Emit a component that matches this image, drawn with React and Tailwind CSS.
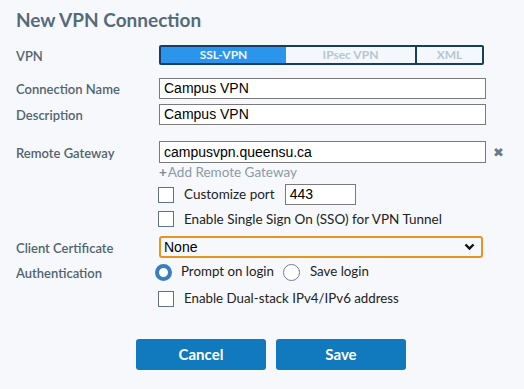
import React from 'react';

const labelCls = 'w-[143px] shrink-0 pt-[3px] text-[13px] font-semibold text-[#52646f]';

function Checkbox() {
  return <span className="block h-[16px] w-[16px] shrink-0 border border-[#60717f] bg-white" />;
}

function Radio({ checked }) {
  return checked ? (
    <span className="block h-[17px] w-[17px] shrink-0 rounded-full border-[4px] border-[#3a7ebf] bg-white" />
  ) : (
    <span className="block h-[17px] w-[17px] shrink-0 rounded-full border border-[#6f7f8c] bg-white" />
  );
}

function TextInput({ value, className = '' }) {
  return (
    <div
      className={`flex h-full items-center border border-[#7a7a7a] bg-white pl-[4px] font-['Liberation_Sans',Arial,sans-serif] text-[14px] text-black ${className}`}
    >
      {value}
    </div>
  );
}

export default function App() {
  return (
    <div className="h-[389px] w-[524px] overflow-hidden bg-[#f7f8fb] pl-[16px] font-['Lato',sans-serif]">
      <h1 className="h-[34px] pt-[6px] text-[19px] font-bold leading-[28px] text-[#566b79]">New VPN Connection</h1>

      <div className="mt-[11px] flex h-[20px] items-center">
        <div className={labelCls + ' pt-0'}>VPN</div>
        <div className="flex h-full w-[325px] overflow-hidden rounded-[2px] border-2 border-[#163d63] text-[12px] font-bold">
          <div className="flex w-[125px] items-center justify-center bg-[#2a95eb] text-[#f2f7fc]">SSL-VPN</div>
          <div className="flex w-[131px] items-center justify-center border-r-2 border-[#163d63] bg-[#f4f7fb] text-[#b5c6d2]">
            IPsec VPN
          </div>
          <div className="flex flex-1 items-center justify-center bg-[#f4f7fb] text-[#b5c6d2]">XML</div>
        </div>
      </div>

      <div className="mt-[13px] flex h-[21px] items-center">
        <div className={labelCls}>Connection Name</div>
        <TextInput value="Campus VPN" className="w-[327px]" />
      </div>

      <div className="mt-[5px] flex h-[21px] items-center">
        <div className={labelCls}>Description</div>
        <TextInput value="Campus VPN" className="w-[327px]" />
      </div>

      <div className="mt-[16px] flex h-[22px] items-center">
        <div className={labelCls}>Remote Gateway</div>
        <TextInput value="campusvpn.queensu.ca" className="w-[327px]" />
        <span className="ml-[7px] text-[13px] leading-none text-[#6c7a86]">✖</span>
      </div>

      <div className="flex h-[18px] items-center pl-[143px] text-[13.5px] text-[#8b9aa5]">
        <span className="mr-[1px] font-bold text-[#7b8b97]">+</span>Add Remote Gateway
      </div>

      <div className="mt-[3px] flex h-[21px] items-center pl-[142px] text-[13.5px] text-[#222]">
        <Checkbox />
        <span className="ml-[10px]">Customize port</span>
        <div className="ml-[10px] h-full w-[71px]">
          <TextInput value="443" />
        </div>
      </div>

      <div className="mt-[5px] flex h-[18px] items-center pl-[142px] text-[13.5px] text-[#222]">
        <Checkbox />
        <span className="ml-[10px]">Enable Single Sign On (SSO) for VPN Tunnel</span>
      </div>

      <div className="mt-[8px] flex h-[22px] items-center">
        <div className={labelCls}>Client Certificate</div>
        <div className="flex h-full w-[324px] items-center justify-between rounded-[3px] border-2 border-[#e6951f] bg-[#f7f8fb] pl-[3px] pr-[6px] font-['Liberation_Sans',Arial,sans-serif] text-[14px] text-black">
          None
          <svg width="11" height="8" viewBox="0 0 11 8">
            <polyline points="1.5,1.5 5.5,5.5 9.5,1.5" fill="none" stroke="#111" strokeWidth="2.4" />
          </svg>
        </div>
      </div>

      <div className="mt-[5px] flex h-[18px] items-center text-[13.3px] text-[#222]">
        <div className={labelCls + ' text-[13px]'}>Authentication</div>
        <div className="-ml-[4px] flex items-center">
          <Radio checked />
          <span className="ml-[9px]">Prompt on login</span>
          <span className="ml-[9px]">
            <Radio />
          </span>
          <span className="ml-[10px]">Save login</span>
        </div>
      </div>

      <div className="mt-[10px] flex h-[16px] items-center pl-[142px] text-[13.3px] text-[#222]">
        <Checkbox />
        <span className="ml-[10px]">Enable Dual-stack IPv4/IPv6 address</span>
      </div>

      <div className="mt-[32px] flex h-[31px] gap-[10px] pl-[120px]">
        <button className="w-[130px] rounded-[3px] bg-[#1179bd] text-[15px] font-bold text-white">Cancel</button>
        <button className="w-[130px] rounded-[3px] bg-[#1179bd] text-[15px] font-bold text-white">Save</button>
      </div>
    </div>
  );
}
